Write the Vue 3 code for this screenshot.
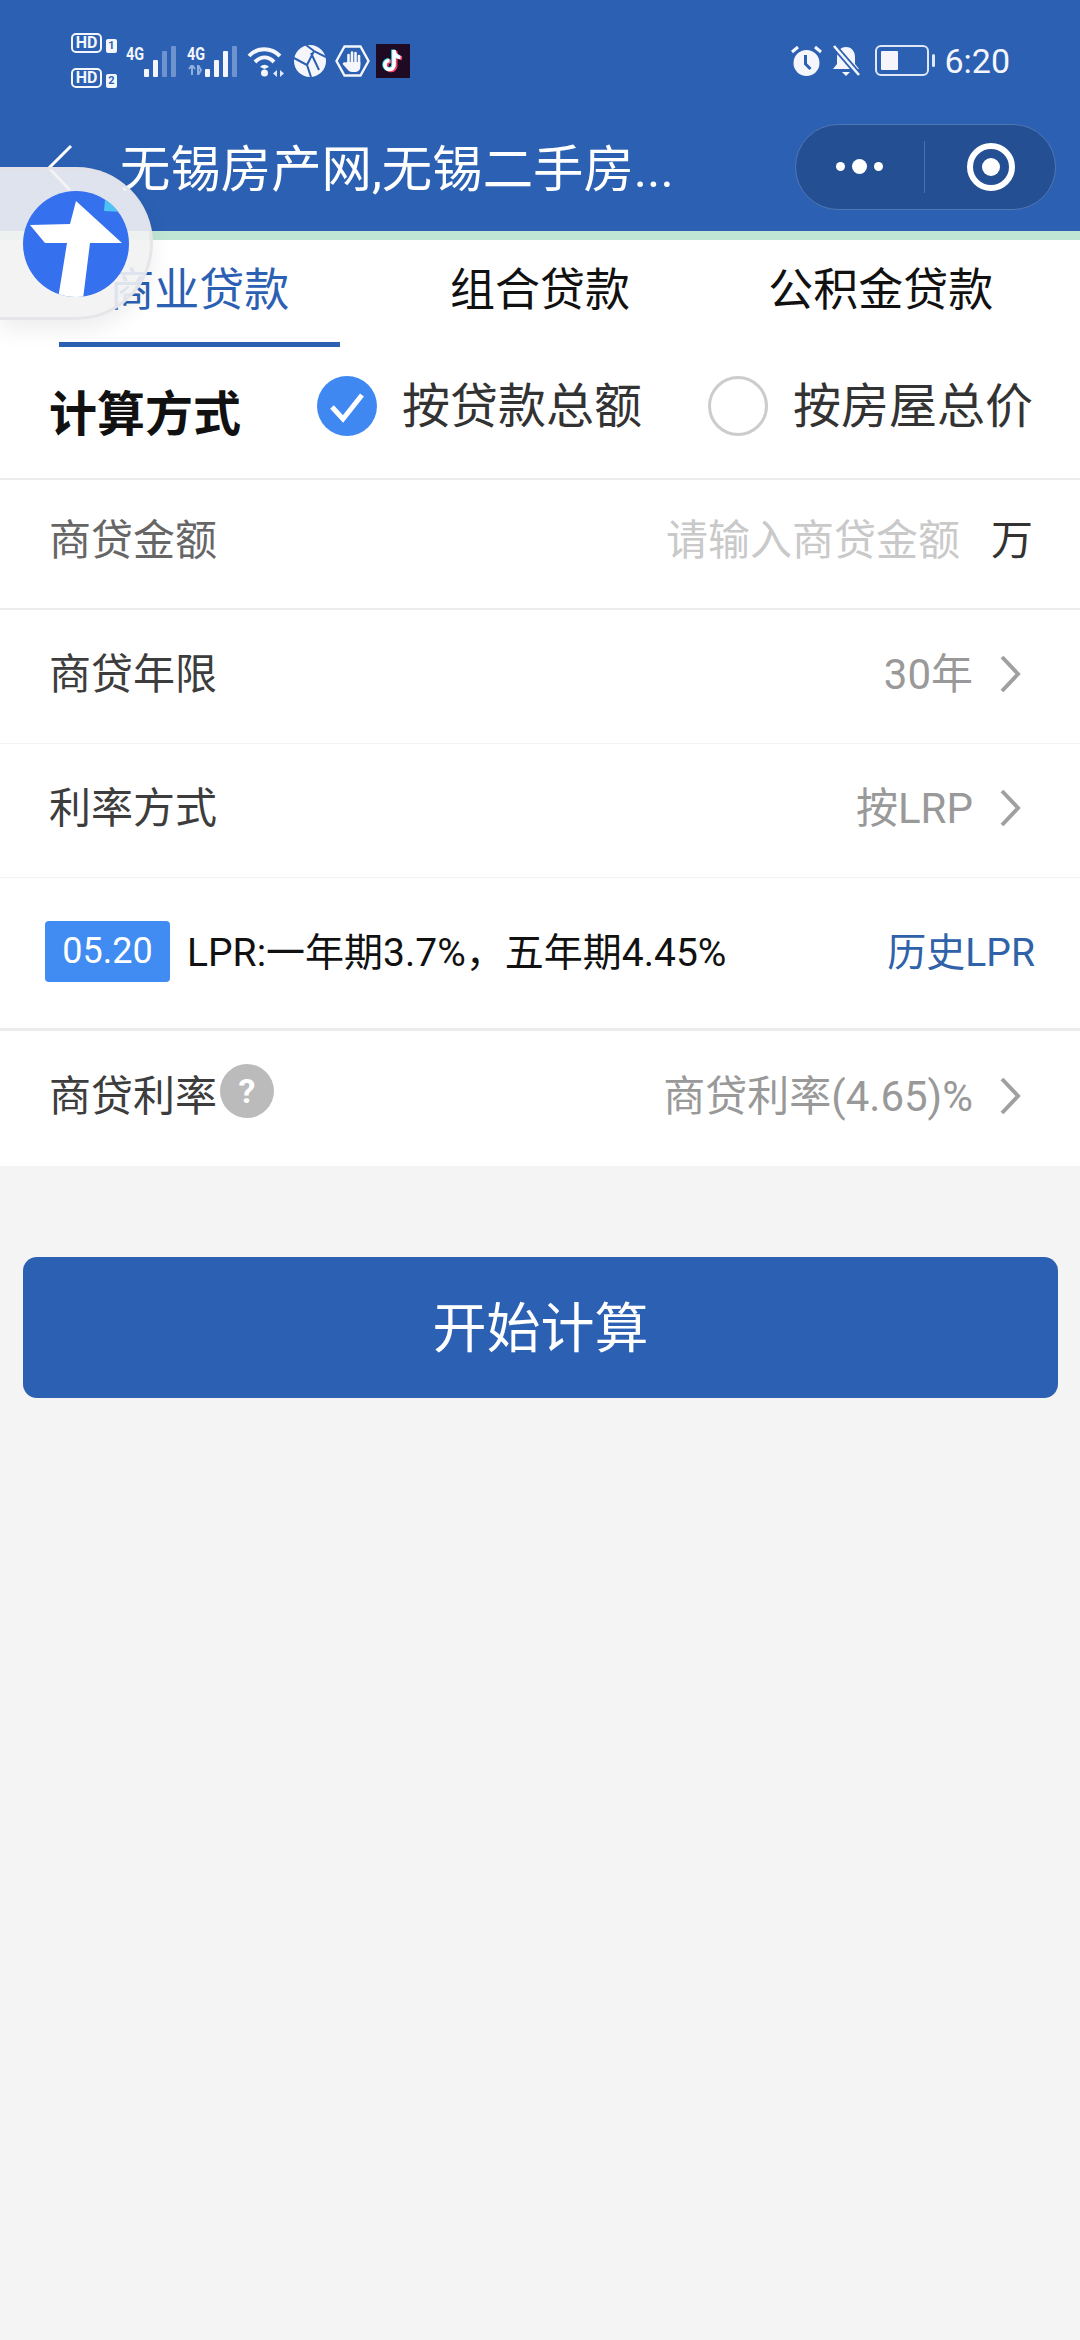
<script setup>
const tabs = ['商业贷款', '组合贷款', '公积金贷款']
const barHeights = [8, 17, 26, 31]
</script>

<template>
  <div class="page">
    <header class="top">
      <div class="status">
        <div class="hd-stack">
          <div class="hd-line"><span class="hd">HD</span><span class="sim">1</span></div>
          <div class="hd-line"><span class="hd">HD</span><span class="sim">2</span></div>
        </div>
        <div class="net first">
          <span class="four-g">4G</span>
          <div class="bars">
            <i v-for="(h, i) in barHeights" :key="i" :class="['bar', 'h' + h, { dim: i > 1 }]"></i>
          </div>
        </div>
        <div class="net second">
          <div class="four-g-wrap">
            <span class="four-g">4G</span>
            <svg class="updown" width="17" height="10" viewBox="0 0 17 10"><path d="M5 0v10M2 4l3-4 3 4M11 0v10l3-5z" fill="none" stroke="#8fb0e0" stroke-width="2"/></svg>
          </div>
          <div class="bars">
            <i v-for="(h, i) in barHeights" :key="i" :class="['bar', 'h' + h, { dim: i > 2 }]"></i>
          </div>
        </div>
        <svg class="wifi" width="38" height="32" viewBox="0 0 38 32">
          <path d="M2 11C10 2 24 2 33 11M8 17c6-6 13-6 19 0" fill="none" stroke="#f4f6fb" stroke-width="4"/>
          <path d="M13 22c3-3 6-3 9 0l-4.500 2z" fill="#f4f6fb"/>
          <circle cx="17.500" cy="28" r="3.500" fill="#f4f6fb"/>
          <path d="M30 25l-4 3.500 4 3.500zM33 25l4 3.500-4 3.500z" fill="#dfe8f6"/>
        </svg>
        <svg class="globe" width="32" height="32" viewBox="0 0 32 32">
          <circle cx="16" cy="16" r="16" fill="#f4f6fb"/>
          <path d="M0 13l13 7 4 12M13 20L20 6 32 12M20 6l-8-6M17 8l8 17" fill="none" stroke="#2b60b3" stroke-width="2"/>
        </svg>
        <svg class="hand" width="35" height="32" viewBox="0 0 35 32">
          <path d="M9.500 1.500h16L33.500 16l-8 14.500h-16L1.500 16z" fill="none" stroke="#f4f6fb" stroke-width="2.400"/>
          <path d="M13.500 10v9M17 7.500v11M20.500 8v10M24 11v9" stroke="#f4f6fb" stroke-width="2.600" stroke-linecap="round"/>
          <path d="M12.300 17h13v5c0 3-2.500 5-5.500 5h-2.500c-2.500 0-3.800-1-4.800-2.500L8 19.500c-1-1.500 1-3 2.500-2z" fill="#f4f6fb"/>
        </svg>
        <div class="tiktok">
          <svg width="24" height="26" viewBox="0 0 24 26">
            <path d="M13 2v15a4.500 4.500 0 1 1-4.500-4.500M13 3c.5 3.500 3 6 6.500 6.500" fill="none" stroke="#f4416b" stroke-width="4" transform="translate(1.500 .8)"/>
            <path d="M13 2v15a4.500 4.500 0 1 1-4.500-4.500M13 3c.5 3.500 3 6 6.500 6.500" fill="none" stroke="#3ce0e6" stroke-width="4" transform="translate(-.8 -.4)"/>
            <path d="M13 2v15a4.500 4.500 0 1 1-4.500-4.500M13 3c.5 3.500 3 6 6.500 6.500" fill="none" stroke="#fff" stroke-width="3.600"/>
          </svg>
        </div>

        <div class="status-right">
          <svg width="33" height="32" viewBox="0 0 33 32">
            <circle cx="16.500" cy="18" r="13" fill="#f4f6fb"/>
            <path d="M2 7l6-5M31 7l-6-5" stroke="#f4f6fb" stroke-width="3" fill="none"/>
            <path d="M15.500 10v9l5 5" stroke="#2b60b3" stroke-width="3" fill="none"/>
          </svg>
          <svg class="bell" width="32" height="32" viewBox="0 0 30 32">
            <path d="M15 2c-6 0-9 5-9 10v7l-4 5h26l-4-5v-7c0-5-3-10-9-10zM11 27h8l-4 4z" fill="#f4f6fb"/>
            <path d="M3 1l25 29" stroke="#2b60b3" stroke-width="6"/>
            <path d="M3 1l25 29" stroke="#f4f6fb" stroke-width="2.600"/>
          </svg>
          <div class="battery"><i class="level"></i></div>
          <i class="nub"></i>
          <span class="time">6:20</span>
        </div>
      </div>

      <div class="nav">
        <svg class="back" width="30" height="48" viewBox="0 0 30 48">
          <path d="M25 2L3 24l21 22" fill="none" stroke="#fff" stroke-width="3"/>
        </svg>
        <div class="title">无锡房产网,无锡二手房...</div>
        <div class="capsule">
          <div class="capsule-part">
            <i class="dot small"></i><i class="dot"></i><i class="dot small"></i>
          </div>
          <i class="capsule-line"></i>
          <div class="capsule-part target">
            <svg width="50" height="50" viewBox="0 0 50 50">
              <circle cx="25" cy="25" r="21" fill="none" stroke="#fff" stroke-width="6"/>
              <circle cx="25" cy="25" r="9" fill="#fff"/>
            </svg>
          </div>
        </div>
      </div>
    </header>
    <div class="mint"></div>

    <div class="form">
      <nav class="tabs">
        <div v-for="(t, i) in tabs" :key="t" :class="['tab', { on: i === 0 }]">{{ t }}</div>
      </nav>

      <div class="calc">
        <div class="calc-title">计算方式</div>
        <div class="options">
          <div class="option">
            <svg width="60" height="60" viewBox="0 0 60 60">
              <circle cx="30" cy="30" r="30" fill="#3f88f2"/>
              <path d="M15 31l11 12 19-24" fill="none" stroke="#fff" stroke-width="5"/>
            </svg>
            <span>按贷款总额</span>
          </div>
          <div class="option">
            <i class="radio-off"></i>
            <span>按房屋总价</span>
          </div>
        </div>
      </div>

      <div class="row row-amount">
        <span class="label light">商贷金额</span>
        <span class="holder">请输入商贷金额</span>
        <span class="unit">万</span>
      </div>
      <div class="row row-thin">
        <span class="label">商贷年限</span>
        <span class="value">30年</span>
        <svg class="chev" width="24" height="38" viewBox="0 0 24 38"><path d="M4 2l16 17L4 36" fill="none" stroke="#a0a0a0" stroke-width="4"/></svg>
      </div>
      <div class="row row-thin">
        <span class="label">利率方式</span>
        <span class="value">按LRP</span>
        <svg class="chev" width="24" height="38" viewBox="0 0 24 38"><path d="M4 2l16 17L4 36" fill="none" stroke="#a0a0a0" stroke-width="4"/></svg>
      </div>
      <div class="lpr">
        <span class="badge">05.20</span>
        <span class="lpr-text">LPR:一年期3.7%，五年期4.45%</span>
        <span class="history">历史LPR</span>
      </div>
      <div class="row row-rate">
        <span class="label">商贷利率</span>
        <span class="help">?</span>
        <span class="value">商贷利率(4.65)%</span>
        <svg class="chev" width="24" height="38" viewBox="0 0 24 38"><path d="M4 2l16 17L4 36" fill="none" stroke="#a0a0a0" stroke-width="4"/></svg>
      </div>
    </div>

    <button class="start">开始计算</button>

    <!-- floating ball sits over the header and tabs -->
    <div class="float">
      <svg width="106" height="106" viewBox="0 0 106 106">
        <defs>
          <clipPath id="ball"><circle cx="53" cy="53" r="53"/></clipPath>
        </defs>
        <circle cx="53" cy="53" r="53" fill="#3570ee"/>
        <g clip-path="url(#ball)">
          <path d="M82 9L81 20 100 21V9z" fill="#4cc3f5"/>
          <path d="M53 10L99 52H67L60 108H35L44 52H22L7 34 47 33z" fill="#fff"/>
        </g>
      </svg>
    </div>
  </div>
</template>

<style scoped>
.page {
  position: relative;
  width: 1080px;
  height: 2340px;
  background: #f4f4f4;
  overflow: hidden;
  font-family: Roboto, "Noto Sans CJK SC", sans-serif;
}
i { display: block; }

.top { background: #2b60b3; height: 231px; color: #fff; }
.mint { height: 9px; background: #c1e5d4; }

/* status bar */
.status {
  height: 105px;
  padding: 16px 70px 0 71px;
  box-sizing: border-box;
  display: flex;
  align-items: center;
  color: #f4f6fb;
}
.hd-stack { display: flex; flex-direction: column; gap: 15px; width: 46px; }
.hd-line { display: flex; align-items: flex-end; gap: 4px; }
.hd {
  width: 31px;
  height: 20px;
  box-sizing: border-box;
  border: 2px solid #f4f6fb;
  border-radius: 5px;
  font-size: 16px;
  line-height: 16px;
  font-weight: 700;
  text-align: center;
}
.sim {
  width: 11px;
  height: 14px;
  background: #f4f6fb;
  color: #2b60b3;
  border-radius: 2px;
  font-size: 11px;
  line-height: 14px;
  font-weight: 700;
  text-align: center;
}
.net { display: flex; align-items: flex-end; height: 32px; }
.net.first { margin-left: 9px; }
.net.second { margin-left: 11px; }
.four-g-wrap { display: flex; flex-direction: column; height: 32px; gap: 2px; }
.updown { display: block; }
.four-g {
  width: 18px;
  font-size: 18px;
  line-height: 18px;
  font-weight: 700;
  transform: scaleX(.8);
  transform-origin: left;
  align-self: flex-start;
}
.bars { display: flex; align-items: flex-end; gap: 4px; height: 31px; }
.bar { width: 5px; background: #f4f6fb; border-radius: 1px; }
.bar.dim { background: #6f93cf; }
.h8 { height: 8px; }
.h17 { height: 17px; }
.h26 { height: 26px; }
.h31 { height: 31px; }
.wifi { margin-left: 10px; }
.globe { margin-left: 9px; }
.hand { margin-left: 9px; }
.tiktok {
  width: 34px;
  height: 34px;
  margin-left: 6px;
  background: #1e0a22;
  display: flex;
  align-items: center;
  justify-content: center;
}
.status-right { margin-left: auto; display: flex; align-items: center; }
.bell { margin-left: 7px; }
.battery {
  width: 54px;
  height: 31px;
  margin-left: 13px;
  box-sizing: border-box;
  border: 2.500px solid #dfe8f6;
  border-radius: 6px;
  padding: 4px;
}
.level { width: 17px; height: 100%; background: #f4f6fb; border-radius: 1px; }
.nub { width: 3px; height: 13px; margin-left: 3px; background: #dfe8f6; border-radius: 2px; }
.time { margin-left: 9px; font-size: 34px; line-height: 40px; }

/* title row */
.nav {
  height: 126px;
  padding: 0 24px 0 46px;
  box-sizing: border-box;
  display: flex;
  align-items: center;
}
.back { flex: none; }
.title { margin: 0 0 6px 44px; font-size: 50.4px; white-space: nowrap; }
.capsule {
  margin-left: auto;
  width: 261px;
  height: 86px;
  margin-top: -3px;
  box-sizing: border-box;
  background: #254f93;
  border: 1.500px solid #5076b3;
  border-radius: 43px;
  display: flex;
  align-items: center;
}
.capsule-part { flex: 1; display: flex; align-items: center; justify-content: center; gap: 7px; }
.capsule-part.target { padding-left: 3px; }
.capsule-line { width: 1px; height: 52px; background: #4a71ad; }
.dot { width: 15px; height: 15px; border-radius: 50%; background: #fff; }
.dot.small { width: 9px; height: 9px; }

/* form */
.form { background: #fff; }
.tabs { display: flex; height: 107px; padding: 0 29px; background: #fff; }
.tab {
  flex: 1;
  margin: 0 30px;
  padding-top: 21px;
  box-sizing: border-box;
  text-align: center;
  font-size: 45px;
  line-height: 60px;
  color: #111;
  white-space: nowrap;
}
.tab.on { color: #2b60b3; border-bottom: 5px solid #2b60b3; height: 107px; }

.calc {
  height: 133px;
  padding: 0 47px 0 49px;
  box-sizing: border-box;
  border-bottom: 2px solid #ececec;
  display: flex;
  align-items: center;
}
.calc-title { font-size: 48px; font-weight: 700; color: #111; padding-bottom: 5px; white-space: nowrap; }
.options { margin-left: auto; display: flex; gap: 66px; padding-bottom: 13px; }
.option { display: flex; align-items: center; gap: 25px; font-size: 48px; color: #333; white-space: nowrap; }
.option span { margin-bottom: 8px; }
.option svg { display: block; }
.radio-off { width: 60px; height: 60px; box-sizing: border-box; border: 3px solid #ccc; border-radius: 50%; }

.row {
  display: flex;
  align-items: center;
  padding: 0 49px 12px;
  box-sizing: border-box;
  font-size: 42px;
}
.row-amount { height: 130px; border-bottom: 2px solid #ececec; padding: 0 47px 16px 49px; }
.row-thin { height: 134px; border-bottom: 1px solid #f3f3f3; }
.row-rate { height: 135px; }
.label { color: #3d3d3d; white-space: nowrap; }
.label.light { color: #666; }
.holder { margin-left: auto; color: #c9c9c9; white-space: nowrap; }
.unit { margin-left: 31px; color: #333; }
.value { margin-left: auto; color: #999; white-space: nowrap; font-size: 42px; }
.chev { margin: 6px 9px 0 25px; flex: none; }
.help {
  width: 54px;
  height: 54px;
  margin: -4px 0 0 3px;
  border-radius: 50%;
  background: #bbb;
  color: #fff;
  font-size: 34px;
  font-weight: 700;
  line-height: 54px;
  text-align: center;
}

.lpr {
  height: 153px;
  padding: 0 45px 0 45px;
  box-sizing: border-box;
  border-bottom: 3px solid #ececec;
  display: flex;
  align-items: center;
}
.badge {
  width: 125px;
  height: 61px;
  background: #408cf3;
  border-radius: 4px;
  color: #fff;
  font-size: 36px;
  line-height: 61px;
  text-align: center;
  margin-bottom: 4px;
}
.lpr-text { margin: 0 0 8px 17px; font-size: 39px; color: #111; white-space: nowrap; }
.history { margin: 0 0 8px auto; font-size: 39px; color: #2f62a8; white-space: nowrap; }

.start {
  display: block;
  width: 1035px;
  height: 141px;
  margin: 91px 0 0 23px;
  padding: 0 0 6px;
  border: none;
  border-radius: 14px;
  background: #2b60b3;
  color: #fff;
  font-family: inherit;
  font-size: 54px;
}

.float {
  position: absolute;
  left: 0;
  top: 167px;
  width: 153px;
  height: 153px;
  padding-left: 23px;
  box-sizing: border-box;
  background: rgba(242, 242, 243, .9);
  border: 3px solid rgba(225, 226, 232, .8);
  border-left: none;
  border-radius: 0 77px 77px 0;
  box-shadow: 0 10px 22px rgba(0, 0, 0, .07);
  display: flex;
  align-items: center;
}
.float svg { display: block; }
</style>
